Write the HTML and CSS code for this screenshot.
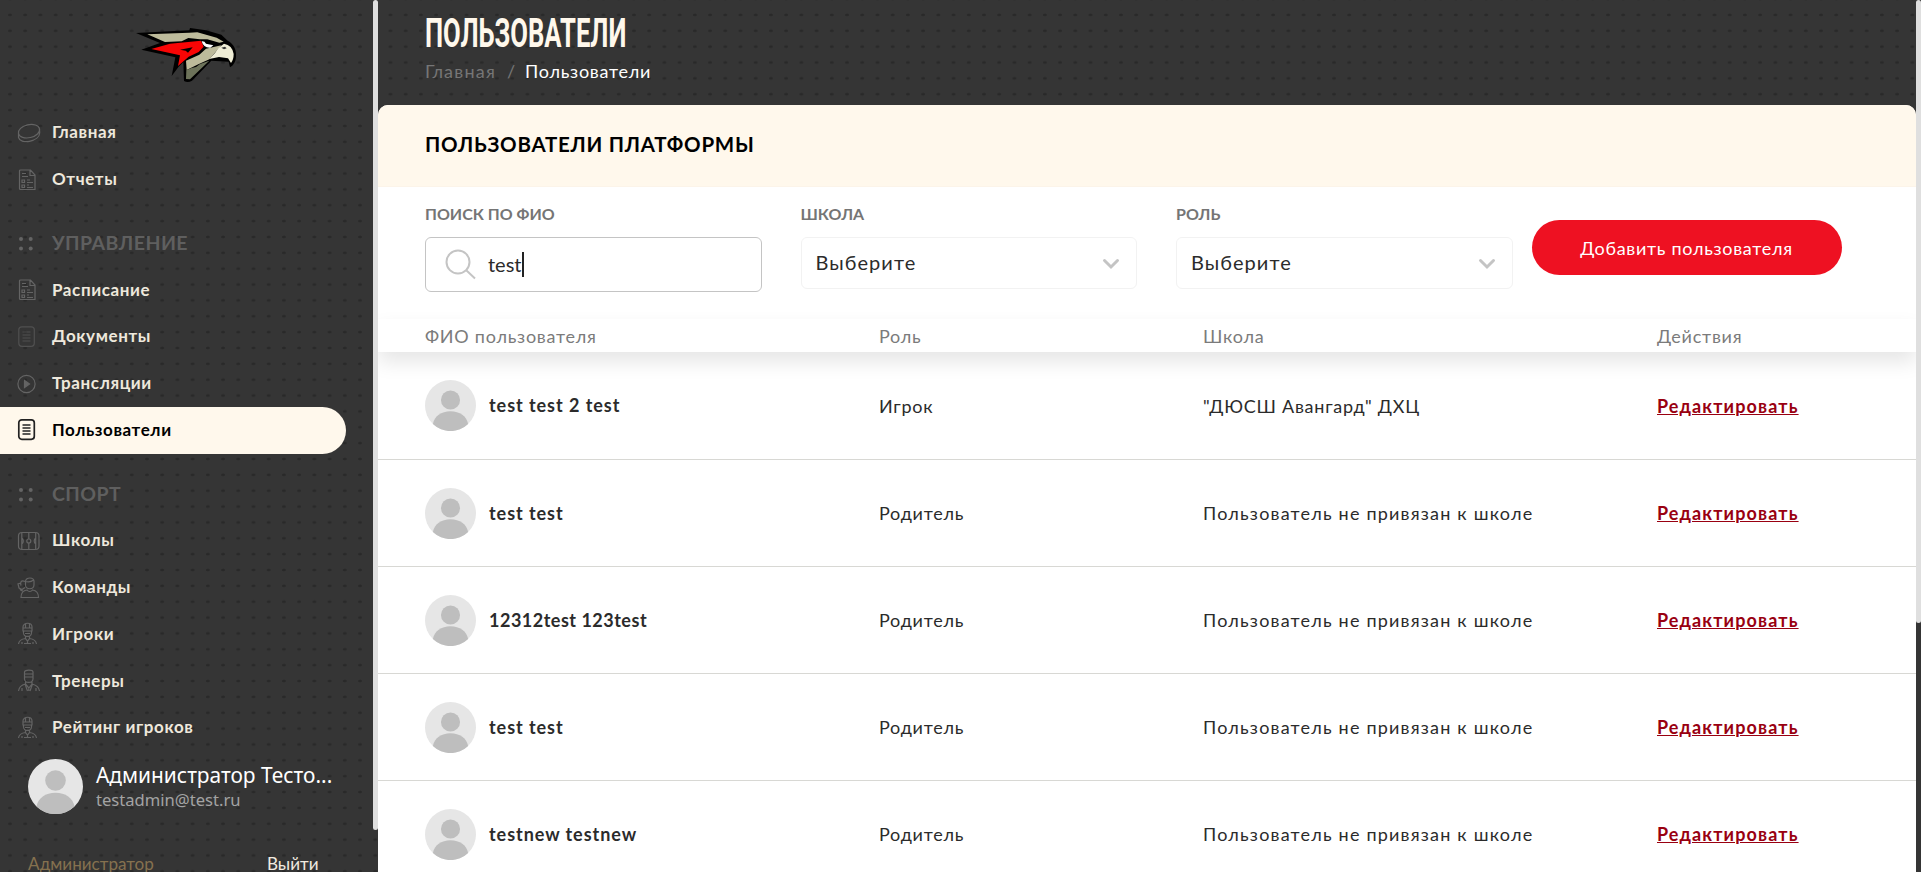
FILE: index.html
```html
<!DOCTYPE html>
<html lang="ru">
<head>
<meta charset="utf-8">
<title>Пользователи</title>
<link rel="stylesheet" href="styles.css">
</head>
<body>
<svg class="defs" width="0" height="0" aria-hidden="true">
  <symbol id="avatar" viewBox="0 0 55 55"><circle cx="27.5" cy="27.5" r="27.5" fill="#e6e6e6"/><circle cx="27.5" cy="21.5" r="10.3" fill="#bebebe"/><path d="M8.5 47.5C10 39 17.500 33.800 27.500 33.800S45 39 46.500 47.500A27.500 27.500 0 0 1 8.500 47.500Z" fill="#bebebe"/></symbol>
  <symbol id="puck" viewBox="0 0 24 24"><ellipse cx="12" cy="10.200" rx="10.800" ry="6.500" transform="rotate(-13 12 10.200)"/><path d="M1.500 12.500v4c1 3.500 5.500 5 11 3.800 6-1.200 10-4.600 10.200-8.300l-.2-4"/></symbol>
  <symbol id="report" viewBox="0 0 24 24"><path d="M3.500 2h10l4.500 5v14.500H3.500a1 1 0 0 1-1-1V3a1 1 0 0 1 1-1ZM13 2v5.500h5M5 5.500h4M5 8.500h6M5 12h2.500v2.500H5zM5 17h2.500v2.500H5zM10 12h3M10 14.500h6M10 17h2M10 19.500h6"/></symbol>
  <symbol id="doc" viewBox="0 0 24 24"><rect x="1.800" y="1.800" width="15.500" height="19.500" rx="3"/><path d="M5.500 7h8M5.500 10h8M5.500 13h8M5.500 16h8"/></symbol>
  <symbol id="play" viewBox="0 0 24 24"><circle cx="9.500" cy="12" r="8.600"/><path d="M7.500 8.500v7l5-3.500z" fill="currentColor"/></symbol>
  <symbol id="rink" viewBox="0 0 24 24"><rect x="1.500" y="3.500" width="20.500" height="17" rx="3.500"/><path d="M4.800 4v16M18.700 4v16M11.800 4v6M11.800 14v6M4.800 9c2 1.500 2 4.500 0 6M18.700 9c-2 1.500-2 4.500 0 6"/><circle cx="11.800" cy="12" r="2"/></symbol>
  <symbol id="team" viewBox="0 0 24 24"><path d="M8.500 5c1-4 8-4 8.500 0v4c-.5 5-8 5-8.500 0zM8.500 5.500c3 .8 6 .3 8-1.500M4 21.500c0-4.500 2-7 6-7.500 1.500 2 4 2 5.500 0 4 .5 6 3 6 7.500zM8 5.500c-4-2-5 1-4 4M4 7l-3 1 1 4 3 1.500 3-2M3 13c.5 1.500 1.500 2 3 2"/></symbol>
  <symbol id="player" viewBox="0 0 24 24"><path d="M6 9.500V5c0-5 9-5 9 0v4.500M5.500 6h10M6 9h9M6.500 9v2c.5 4.500 7.500 4.500 8 0V9M8.500 2v4M12.500 2v4M8 11.500h5M8.500 14.500v2l2 2.500 2-2.500v-2M8.500 16.500c-4 .5-6.500 2-7 5.500M12.500 16.500c4 .5 6.500 2 7 5.500M10.500 19v3M5 20v2M16 20v2M7 21.500h7"/></symbol>
  <symbol id="coach" viewBox="0 0 24 24"><path d="M7.500 8V3c0-2.500 8.500-2.500 8.500 0v5M7 5h9.500M7.500 8H16v2c-.5 4.500-8 4.500-8.500 0zM8.500 13v2l3.300 4 3.200-4v-2M8.500 15c-4 1-6.500 2.500-7 7M15 15c4 1 7 2.500 7.500 7M8 15l2.500 7M15.500 15L13 22M11.800 18v4M5 19v3M19 19v3"/></symbol>
  <symbol id="grip" viewBox="0 0 24 24"><g fill="currentColor" stroke="none"><circle cx="4" cy="8" r="2"/><circle cx="13.700" cy="8" r="2"/><circle cx="4" cy="17.500" r="2"/><circle cx="13.700" cy="17.500" r="2"/></g></symbol>
</svg>
<div class="app">
  <aside class="sidebar">
    <div class="logo">
      <svg width="140" height="90" viewBox="0 0 420 270">
        <path d="M48 69L120 65 208 61 210 54 258 61 304 74 323 92C342 102 350 120 348 140 347 156 340 166 330 172L326 155 274 152 216 212Q204 220 192 213L190 156 176 170 155 198 166 142 64 119 120 99Z" fill="#000"/>
        <path d="M82 73L208 68 232 67 290 83 311 95 298 98 262 88 240 88 205 84 185 94 135 96Z" fill="#bdbb9b"/>
        <path d="M94 117L150 101 243 92 251 110 236 126 206 140 174 168 180 136Z" fill="#f90505"/>
        <path d="M180 119L218 112 204 128 197 122Z" fill="#000"/>
        <path d="M198 152L238 134 258 116 304 106 268 148 235 163 200 180Z" fill="#bdbb9b"/>
        <path d="M199 180L215 174 228 171 240 162 268 152 210 208 198 207Z" fill="#6d735a"/>
        <path d="M245 94Q254 93 258 101L280 106 271 113Q250 114 245 94Z" fill="#fff"/>
        <path d="M312 101Q337 105 341 132 341 149 333 159L324 145 297 141 268 147Q286 130 296 113Z" fill="#efedd5"/>
        <path d="M304 113L315 110 320 115 312 118Z" fill="#333"/>
      </svg>
    </div>
    <nav class="menu">
      <a class="item"><svg class="ico"><use href="#puck"/></svg>Главная</a>
      <a class="item"><svg class="ico"><use href="#report"/></svg>Отчеты</a>
      <div class="section"><svg class="ico"><use href="#grip"/></svg>УПРАВЛЕНИЕ</div>
      <a class="item"><svg class="ico"><use href="#report"/></svg>Расписание</a>
      <a class="item"><svg class="ico dim"><use href="#doc"/></svg>Документы</a>
      <a class="item"><svg class="ico"><use href="#play"/></svg>Трансляции</a>
      <a class="item active"><svg class="ico"><use href="#doc"/></svg>Пользователи</a>
      <div class="section"><svg class="ico"><use href="#grip"/></svg>СПОРТ</div>
      <a class="item"><svg class="ico"><use href="#rink"/></svg>Школы</a>
      <a class="item"><svg class="ico"><use href="#team"/></svg>Команды</a>
      <a class="item"><svg class="ico"><use href="#player"/></svg>Игроки</a>
      <a class="item"><svg class="ico"><use href="#coach"/></svg>Тренеры</a>
      <a class="item"><svg class="ico"><use href="#player"/></svg>Рейтинг игроков</a>
    </nav>
    <div class="user">
      <svg class="user-pic"><use href="#avatar"/></svg>
      <div class="user-text"><div class="user-name">Администратор Тесто...</div><div class="user-mail">testadmin@test.ru</div></div>
    </div>
    <div class="session"><span class="role">Администратор</span><a class="logout">Выйти</a></div>
  </aside>
  <div class="track track-left"><div class="thumb"></div></div>
  <main class="main">
    <header class="top">
      <h1 class="title"><span class="title-text">ПОЛЬЗОВАТЕЛИ</span></h1>
      <div class="crumbs"><span class="crumb">Главная</span><span class="slash">/</span><span class="current">Пользователи</span></div>
    </header>
    <section class="card">
      <div class="card-head"><h2 class="card-title">ПОЛЬЗОВАТЕЛИ ПЛАТФОРМЫ</h2></div>
      <div class="filters">
        <div class="field"><div class="label">ПОИСК ПО ФИО</div>
          <div class="search"><svg class="loupe" width="32" height="32" viewBox="0 0 32 32"><circle cx="13" cy="13" r="11.500"/><path d="M21 21l9 8.500"/></svg><span class="query">test</span><span class="caret"></span></div></div>
        <div class="field"><div class="label">ШКОЛА</div>
          <div class="select"><span>Выберите</span><svg class="chevron" width="18" height="12" viewBox="0 0 18 12"><path d="M2.500 2.500L9 9l6.500-6.500"/></svg></div></div>
        <div class="field"><div class="label">РОЛЬ</div>
          <div class="select"><span>Выберите</span><svg class="chevron" width="18" height="12" viewBox="0 0 18 12"><path d="M2.500 2.500L9 9l6.500-6.500"/></svg></div></div>
        <a class="add">Добавить пользователя</a>
      </div>
      <div class="thead"><span>ФИО пользователя</span><span>Роль</span><span>Школа</span><span>Действия</span></div>
      <div class="rows">
        <div class="row"><div class="person"><svg class="pic"><use href="#avatar"/></svg><span class="name">test test 2 test</span></div><span>Игрок</span><span>"ДЮСШ Авангард" ДХЦ</span><span><a class="edit">Редактировать</a></span></div>
        <div class="row"><div class="person"><svg class="pic"><use href="#avatar"/></svg><span class="name">test test</span></div><span>Родитель</span><span class="unassigned">Пользователь не привязан к школе</span><span><a class="edit">Редактировать</a></span></div>
        <div class="row"><div class="person"><svg class="pic"><use href="#avatar"/></svg><span class="name numeric">12312test 123test</span></div><span>Родитель</span><span class="unassigned">Пользователь не привязан к школе</span><span><a class="edit">Редактировать</a></span></div>
        <div class="row"><div class="person"><svg class="pic"><use href="#avatar"/></svg><span class="name">test test</span></div><span>Родитель</span><span class="unassigned">Пользователь не привязан к школе</span><span><a class="edit">Редактировать</a></span></div>
        <div class="row"><div class="person"><svg class="pic"><use href="#avatar"/></svg><span class="name">testnew testnew</span></div><span>Родитель</span><span class="unassigned">Пользователь не привязан к школе</span><span><a class="edit">Редактировать</a></span></div>
      </div>
    </section>
  </main>
  <div class="track track-right"><div class="thumb"></div></div>
</div>
</body>
</html>
```
FILE: styles.css
```css
* { box-sizing: border-box; }
html, body { margin: 0; height: 872px; overflow: hidden; }
body { font-family: Lato, "Open Sans", sans-serif; font-size: 18px; color: #2b2b2b; }
h1, h2 { margin: 0; }
.defs { display: none; }
.app {
  display: flex; height: 872px; background-color: #353535;
  background-image: radial-gradient(ellipse 2.400px 1.700px at center, #292929 60%, transparent 100%);
  background-size: 15.230px 15.860px; background-position: 2.400px 7px;
}
.sidebar { width: 373px; height: 872px; flex: none; display: flex; flex-direction: column; overflow: hidden; }
.logo { height: 109.500px; padding: 10px 0 0 120px; flex: none; }
.logo svg { display: block; }
.item, .section { display: flex; align-items: center; height: 46.750px; padding-left: 17px; gap: 11px; white-space: nowrap; }
.item { width: 346px; padding-bottom: 2px; font-size: 17px; letter-spacing: .6px; font-weight: 700; color: #eee8dc; }
.item .ico { margin-top: 2px; }
.section { margin-top: 17px; padding-bottom: 1px; font-size: 19.500px; letter-spacing: .45px; font-weight: 700; color: #5f5f5f; }
.ico { width: 24px; height: 24px; flex: none; fill: none; stroke: currentColor; stroke-width: 1.200; color: #646464; }
.dim { color: #505050; }
.active { background: #fff8ec; border-radius: 0 23.500px 23.500px 0; color: #000; }
.active .ico { color: #222; stroke-width: 1.700; }
.user { display: flex; gap: 13px; padding: 8px 0 0 28px; flex: none; }
.user-pic { width: 55px; height: 55px; flex: none; }
.user-text { font-family: "Noto Sans", "Open Sans", sans-serif; white-space: nowrap; padding-top: 3px; }
.user-name { font-size: 20.900px; line-height: 27px; color: #fff; }
.user-mail { font-size: 16.600px; line-height: 21px; color: #a3a3a3; }
.session { display: flex; padding: 39px 0 0 28px; line-height: 22px; font-size: 17.100px; white-space: nowrap; }
.role { width: 239px; color: #85714f; }
.logout { color: #f1ebe0; }
.track { width: 5px; flex: none; }
.thumb { background: #dfdfdf; border-radius: 3px; }
.track-left .thumb { height: 830px; }
.track-right .thumb { height: 623px; }
.main { width: 1538px; flex: none; display: flex; flex-direction: column; overflow: hidden; }
.top { height: 105px; flex: none; padding: 10px 0 0 47px; }
.title { height: 46px; line-height: 46px; font-family: Roboto, sans-serif; font-size: 41px; font-weight: 700; color: #fff8ec; white-space: nowrap; }
.title-text { display: inline-block; transform: scaleX(.625); transform-origin: 0 50%; }
.crumbs { display: flex; line-height: 26px; margin-top: 2px; font-size: 18px; white-space: nowrap; }
.crumb, .slash { color: #767676; }
.crumb { width: 82px; letter-spacing: 1.200px; }
.slash { width: 18px; }
.current { color: #fff; letter-spacing: .75px; }
.card { background: #fff; border-radius: 10px 10px 0 0; overflow: hidden; flex: 1; }
.card-head { height: 82px; background: #fff8ec; padding: 26px 0 0 47px; border-bottom: 1px solid #fcf4e9; }
.card-title { font-size: 20.500px; line-height: 27px; letter-spacing: .75px; font-weight: 700; color: #000; }
.filters { display: flex; height: 132px; padding: 17px 0 0 47px; }
.field { width: 336.500px; margin-right: 39px; flex: none; }
.label { font-size: 16px; line-height: 19px; font-weight: 700; color: #757575; margin-bottom: 14px; white-space: nowrap; }
.search { height: 55px; border: 1px solid #c4c4c4; border-radius: 6px; display: flex; align-items: center; padding-left: 19px; }
.loupe { fill: none; stroke: #c4c4c4; stroke-width: 2; margin-right: 11px; }
.query { font-size: 20px; padding-bottom: 2px; }
.caret { width: 2px; height: 25px; background: #222; }
.select { height: 52px; border: 1px solid #f2f2f2; border-radius: 6px; display: flex; align-items: center; justify-content: space-between; padding: 0 16px 3px 14px; font-size: 20px; letter-spacing: 1.050px; }
.chevron { fill: none; stroke: #c4c4c4; stroke-width: 3; stroke-linecap: round; margin-top: 5px; }
.add { width: 310px; height: 55px; margin: 16px 0 0 -20px; flex: none; border-radius: 28px; background: #ee1122; color: #fff; display: flex; align-items: center; justify-content: center; font-size: 18px; letter-spacing: .7px; }
.thead, .row { display: grid; grid-template-columns: 454px 324px 454px 1fr; align-items: center; padding-left: 47px; white-space: nowrap; letter-spacing: .75px; }
.thead { height: 33px; background: #fff; color: #7b7b7b; box-shadow: 0 10px 20px rgba(0,0,0,.1); position: relative; }
.row { height: 107px; border-bottom: 1px solid #d8d8d4; }
.row:first-child { height: 108px; }
.person { display: flex; align-items: center; gap: 13px; }
.pic { width: 51px; height: 51px; }
.name, .edit { font-weight: 700; }
.name { letter-spacing: .95px; padding-bottom: 1px; }
.numeric { letter-spacing: .5px; }
.unassigned { letter-spacing: 1.200px; }
.edit { color: #990011; text-decoration: underline; letter-spacing: 1.130px; }
```
